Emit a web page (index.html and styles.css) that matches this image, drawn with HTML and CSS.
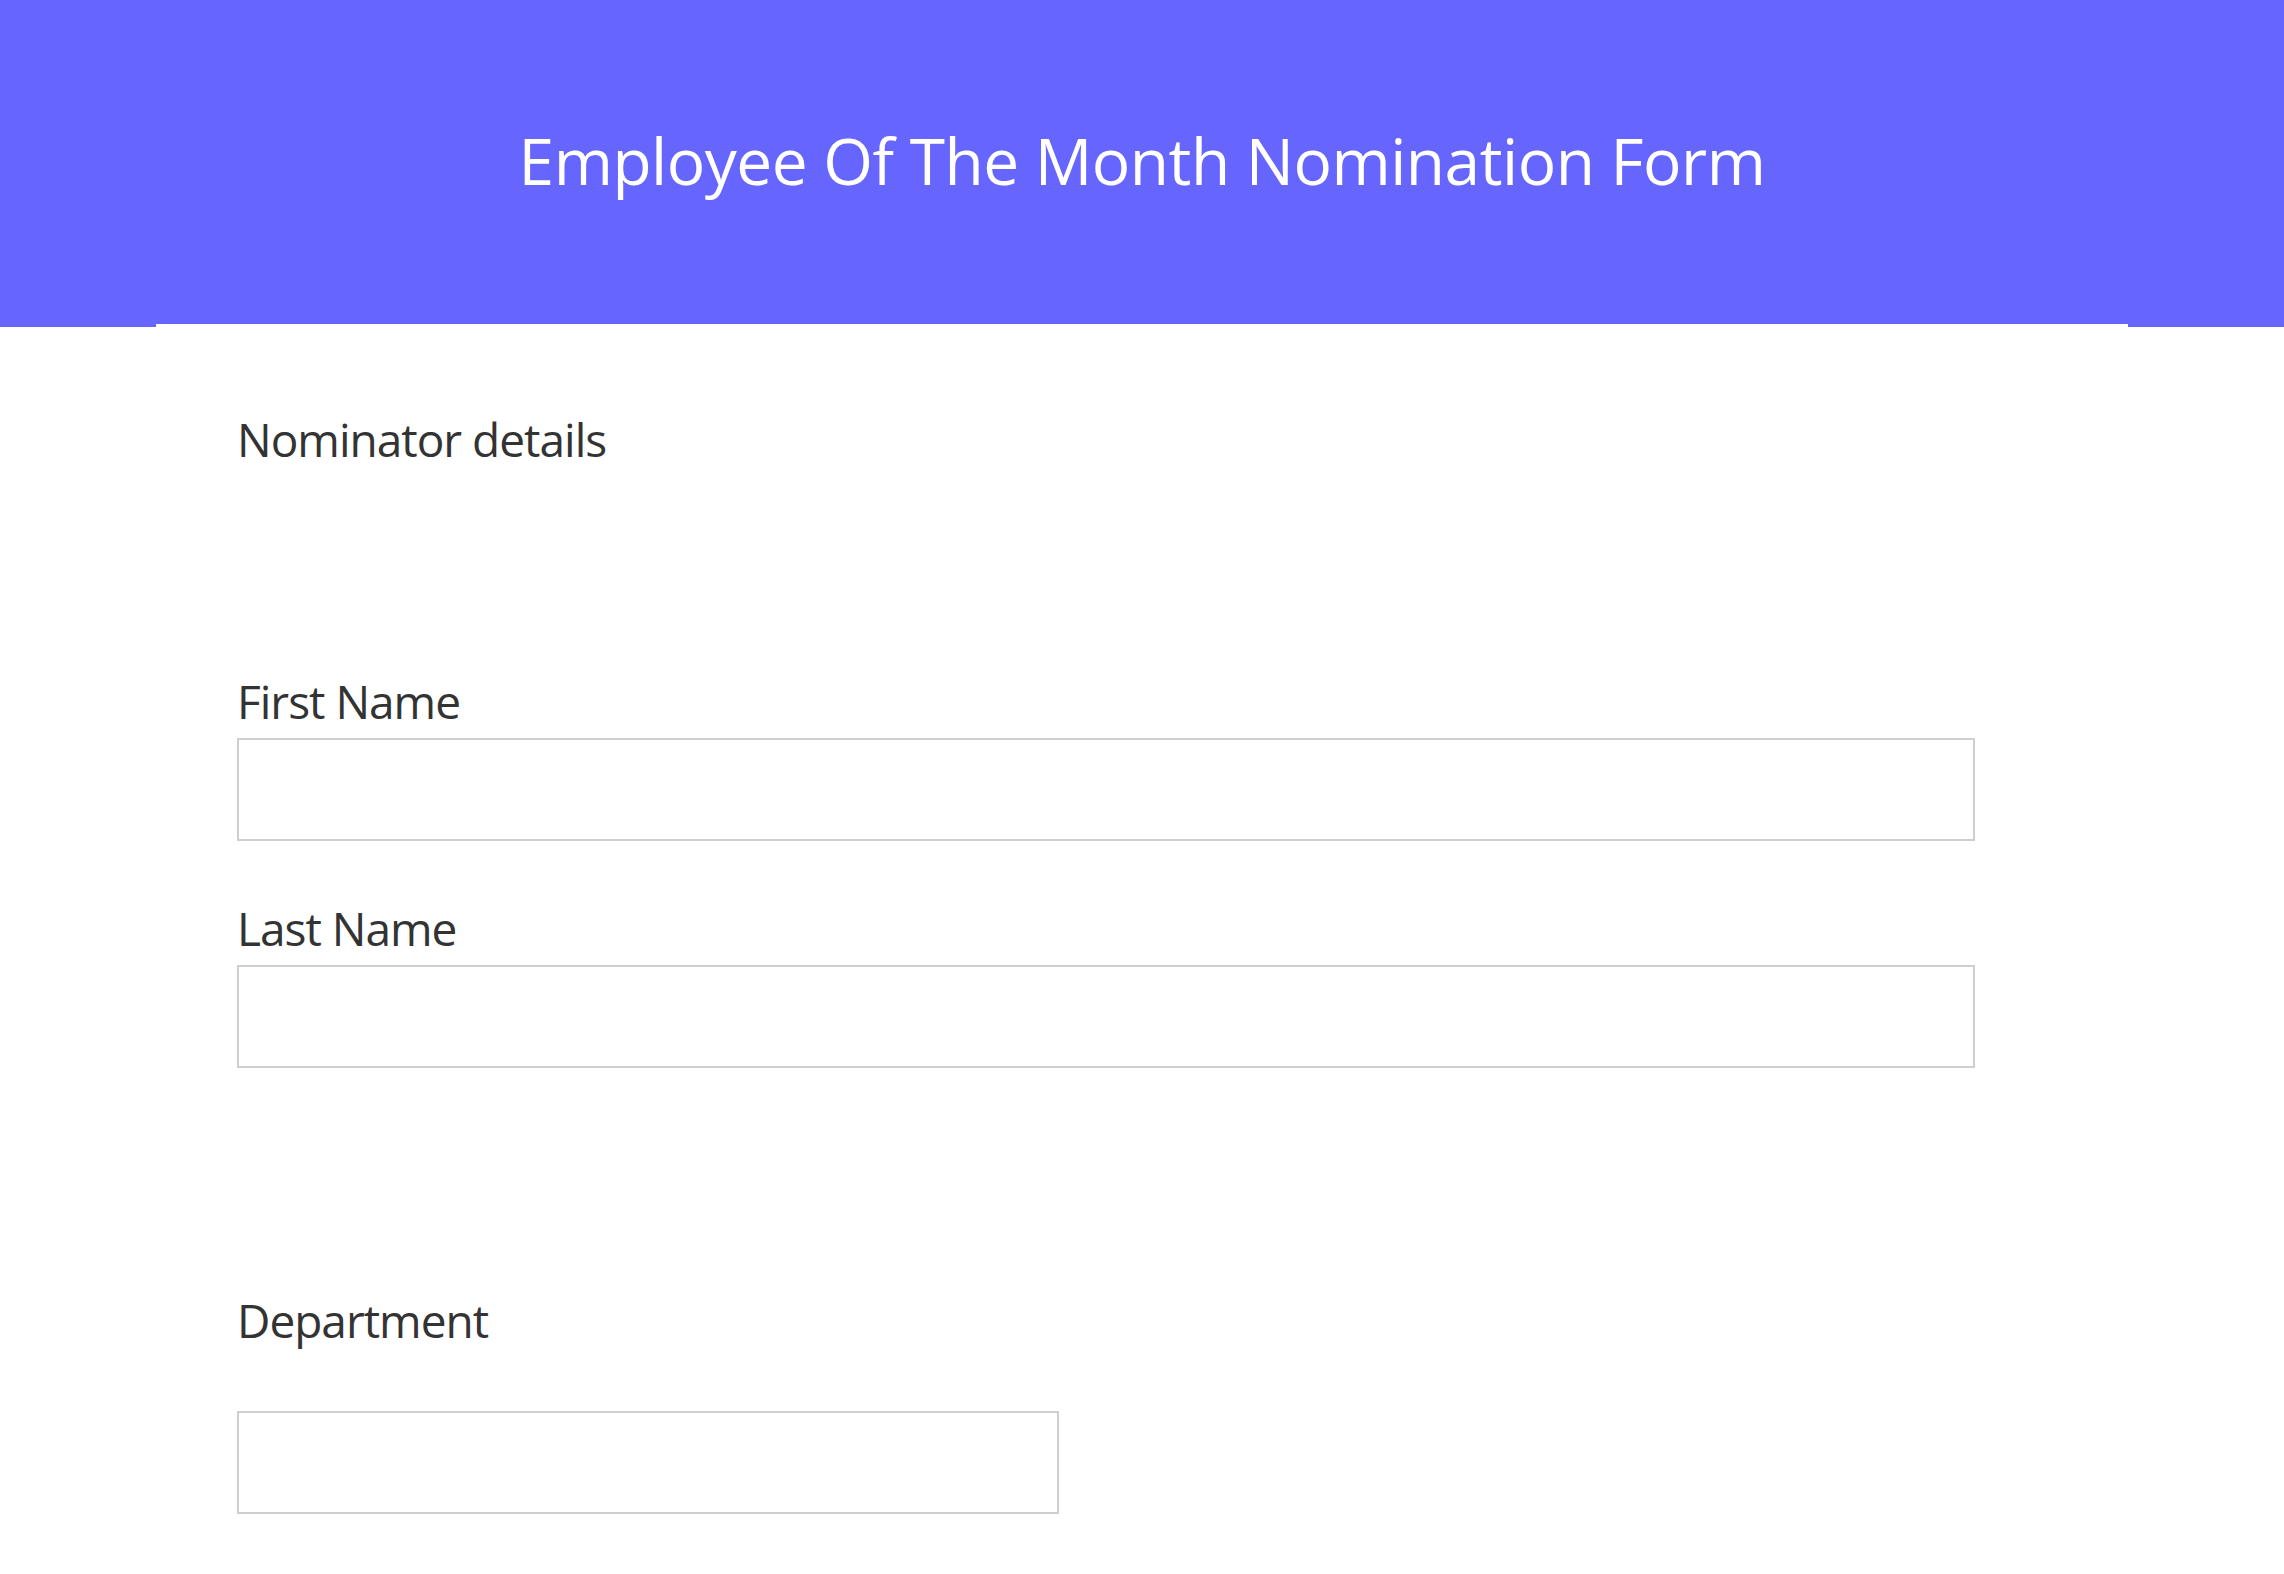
FILE: index.html
```html
<!DOCTYPE html>
<html lang="en">
<head>
  <meta charset="UTF-8">
  <meta name="viewport" content="width=device-width, initial-scale=1.0">
  <title>Employee Of The Month Nomination Form</title>
  <link rel="stylesheet" href="styles.css">
</head>
<body>
  <header class="form-header">
    <h1>Employee Of The Month Nomination Form</h1>
  </header>

  <main class="form-card">
    <h2 class="section-title">Nominator details</h2>

    <div class="field field-first">
      <label for="first-name">First Name</label>
      <input type="text" id="first-name">
    </div>

    <div class="field">
      <label for="last-name">Last Name</label>
      <input type="text" id="last-name">
    </div>

    <div class="field field-dept">
      <label for="department">Department</label>
      <input type="text" id="department" class="input-half">
    </div>
  </main>
</body>
</html>
```

FILE: styles.css
```css
* {
  margin: 0;
  padding: 0;
  box-sizing: border-box;
}

body {
  background: #ffffff;
  font-family: 'Open Sans', 'Noto Sans', sans-serif;
  color: #333333;
}

.form-header {
  background: #6666ff;
  height: 327px;
  display: flex;
  justify-content: center;
  align-items: center;
}

.form-header h1 {
  color: #ffffff;
  font-size: 64px;
  font-weight: 400;
  line-height: 1.2;
  letter-spacing: -0.5px;
  margin-top: -4px;
}

.form-card {
  background: #ffffff;
  margin: -3px 156px 0;
  padding: 86px 153px 120px 81px;
  position: relative;
}

.section-title {
  font-size: 46px;
  font-weight: 400;
  line-height: 58px;
  letter-spacing: -1px;
}

.field {
  display: flex;
  flex-direction: column;
  margin-top: 58px;
}

.field-first {
  margin-top: 204px;
}

.field-dept {
  margin-top: 223px;
}

.field label {
  font-size: 46px;
  line-height: 58px;
  letter-spacing: -1px;
  margin-bottom: 8px;
}

.field-dept label {
  margin-bottom: 62px;
}

.field input {
  height: 103px;
  width: 100%;
  border: 2px solid #cfcfcf;
  background: #ffffff;
  font-family: inherit;
  font-size: 40px;
  padding: 0 20px;
  outline: none;
}

.field input.input-half {
  width: 822px;
}
```
